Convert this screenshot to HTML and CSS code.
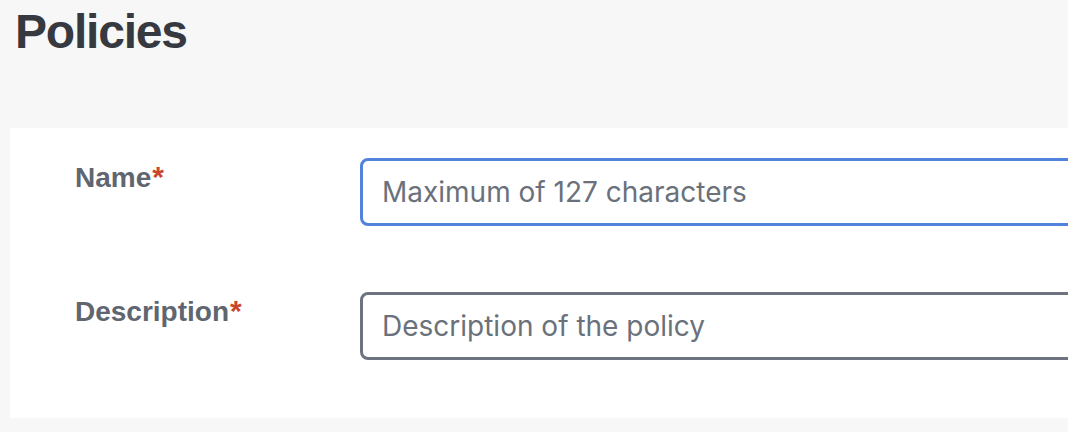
FILE: index.html
```html
<!DOCTYPE html>
<html lang="en">
<head>
<meta charset="utf-8">
<title>Policies</title>
<link rel="stylesheet" href="styles.css">
</head>
<body>
<div class="page">
  <h1 class="title">Policies</h1>
  <form class="card">
    <div class="row">
      <label class="label" for="name">Name<span class="req">*</span></label>
      <input class="field field-focus" id="name" type="text" placeholder="Maximum of 127 characters">
    </div>
    <div class="row">
      <label class="label" for="desc">Description<span class="req">*</span></label>
      <input class="field" id="desc" type="text" placeholder="Description of the policy">
    </div>
  </form>
</div>
</body>
</html>
```

FILE: styles.css
```css
* { box-sizing: border-box; }
html, body {
  margin: 0;
  padding: 0;
  background: #f7f7f7;
  overflow: hidden;
}
.page {
  width: 1068px;
  height: 432px;
  padding-top: 4px;
}
.title {
  margin: 0 0 0 15px;
  font-family: "Liberation Sans", Arial, sans-serif;
  font-weight: 700;
  font-size: 48px;
  line-height: 56px;
  letter-spacing: -1.2px;
  color: #36393f;
}
.card {
  margin: 68px 0 0 10px;
  background: #ffffff;
  padding: 30px 0 58px 65px;
  display: flex;
  flex-direction: column;
  gap: 66px;
}
.row {
  display: flex;
  align-items: flex-start;
}
.label {
  width: 285px;
  flex: none;
  padding-top: 4px;
  font-family: "Liberation Sans", Arial, sans-serif;
  font-weight: 700;
  font-size: 28px;
  line-height: 32px;
  color: #5f6670;
}
.req {
  color: #c9462c;
  margin-left: 1px;
  font-size: 30px;
  line-height: 1;
}
.field {
  flex: none;
  width: 760px;
  height: 68px;
  border: 3px solid #6d7480;
  border-radius: 8px;
  padding: 0 19px;
  font-family: Inter, "Noto Sans", sans-serif;
  font-size: 28px;
  color: #3b3f46;
  background: #fff;
  outline: none;
}
.field-focus {
  border-color: #5083d9;
}
.field::placeholder {
  color: #6b717b;
  opacity: 1;
}
```
